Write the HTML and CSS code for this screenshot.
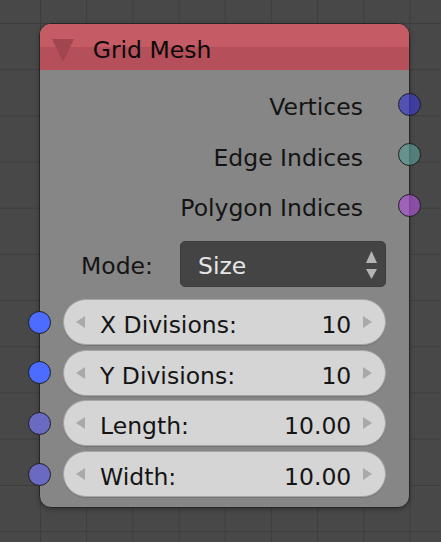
FILE: index.html
```html
<!DOCTYPE html>
<html>
<head>
<meta charset="utf-8">
<link rel="stylesheet" href="styles.css">
</head>
<body>
<div class="canvas">
  <div class="node">
    <div class="header">
      <svg class="collapse" width="22" height="32" viewBox="0 0 22 32"><polygon points="0,8 22,8 11,31" fill="#a1454f"/></svg>
      <span class="title">Grid Mesh</span>
    </div>
    <div class="content">
      <div class="outputs">
        <div class="out"><span class="t">Vertices</span><i class="sock out-sock s-vert"></i></div>
        <div class="out"><span class="t">Edge Indices</span><i class="sock out-sock s-edge"></i></div>
        <div class="out"><span class="t">Polygon Indices</span><i class="sock out-sock s-poly"></i></div>
      </div>
      <div class="mode">
        <span class="mode-label">Mode:</span>
        <div class="select">
          <span class="select-text">Size</span>
          <svg class="updown" width="11" height="28" viewBox="0 0 11 28"><polygon points="5.5,0 11,12 0,12" fill="#b4b4b4"/><polygon points="0,18 11,18 5.5,28" fill="#b4b4b4"/></svg>
        </div>
      </div>
      <div class="fields">
        <div class="field-row"><i class="sock in-sock s-int"></i>
          <div class="field">
            <svg class="arr" width="9" height="12" viewBox="0 0 9 12"><polygon points="9,0 9,12 0,6" fill="#a9a9a9"/></svg>
            <span class="label">X Divisions:</span><span class="value">10</span>
            <svg class="arr arr-r" width="9" height="12" viewBox="0 0 9 12"><polygon points="0,0 9,6 0,12" fill="#a9a9a9"/></svg>
          </div>
        </div>
        <div class="field-row"><i class="sock in-sock s-int"></i>
          <div class="field">
            <svg class="arr" width="9" height="12" viewBox="0 0 9 12"><polygon points="9,0 9,12 0,6" fill="#a9a9a9"/></svg>
            <span class="label">Y Divisions:</span><span class="value">10</span>
            <svg class="arr arr-r" width="9" height="12" viewBox="0 0 9 12"><polygon points="0,0 9,6 0,12" fill="#a9a9a9"/></svg>
          </div>
        </div>
        <div class="field-row"><i class="sock in-sock s-float"></i>
          <div class="field">
            <svg class="arr" width="9" height="12" viewBox="0 0 9 12"><polygon points="9,0 9,12 0,6" fill="#a9a9a9"/></svg>
            <span class="label">Length:</span><span class="value">10.00</span>
            <svg class="arr arr-r" width="9" height="12" viewBox="0 0 9 12"><polygon points="0,0 9,6 0,12" fill="#a9a9a9"/></svg>
          </div>
        </div>
        <div class="field-row"><i class="sock in-sock s-float"></i>
          <div class="field">
            <svg class="arr" width="9" height="12" viewBox="0 0 9 12"><polygon points="9,0 9,12 0,6" fill="#a9a9a9"/></svg>
            <span class="label">Width:</span><span class="value">10.00</span>
            <svg class="arr arr-r" width="9" height="12" viewBox="0 0 9 12"><polygon points="0,0 9,6 0,12" fill="#a9a9a9"/></svg>
          </div>
        </div>
      </div>
    </div>
  </div>
</div>
</body>
</html>
```
FILE: styles.css
```css
html, body {
  margin: 0;
  padding: 0;
}
body {
  width: 441px;
  height: 542px;
  overflow: hidden;
  background-color: #484848;
  background-image:
    linear-gradient(to right, #3d3d3d 1px, transparent 1px),
    linear-gradient(to bottom, #3d3d3d 1px, transparent 1px);
  background-size: 46.2px 46.2px;
  background-position: 40px 23px;
  font-family: "DejaVu Sans", "Liberation Sans", sans-serif;
  font-size: 23.5px;
  color: #141414;
}
.canvas {
  position: relative;
  width: 441px;
  height: 542px;
}
.node {
  position: absolute;
  left: 39px;
  top: 23px;
  width: 371px;
  box-sizing: border-box;
  border: 1px solid #262626;
  border-radius: 12px;
  background: #868686;
  box-shadow: 0 2px 4px rgba(0,0,0,0.25);
}
.header {
  height: 46px;
  border-radius: 11px 11px 0 0;
  background: linear-gradient(to bottom, #c55c65 0, #c55c65 23px, #b5505a 23px, #b5505a 100%);
  display: flex;
  align-items: center;
  padding-left: 12px;
}
.collapse {
  display: block;
}
.title {
  margin-left: 18.7px;
  padding-top: 5px;
  color: #0a0a0a;
}
.content {
  padding: 9px 0 10px 0;
}
.out {
  position: relative;
  height: 50.5px;
  display: flex;
  align-items: center;
  justify-content: flex-end;
  padding-right: 46px;
}
.t {
  padding-top: 6px;
}
.sock {
  position: absolute;
  width: 23px;
  height: 23px;
  box-sizing: border-box;
  border-radius: 50%;
  border: 1px solid #1e1e1e;
  top: calc(50% - 11.5px);
}
.out-sock {
  right: -12px;
}
.s-vert { background: rgba(58, 58, 200, 0.68); }
.s-edge { background: rgba(88, 152, 146, 0.68); }
.s-poly { background: rgba(168, 82, 210, 0.68); }
.mode {
  margin-top: 10.5px;
  height: 46px;
  display: flex;
  align-items: center;
  padding: 0 23px 0 41px;
}
.mode-label {
  width: 99px;
  padding-top: 3px;
}
.select {
  flex: 1;
  height: 46px;
  box-sizing: border-box;
  background: #444444;
  border: 1px solid #3c3c3c;
  border-radius: 5px;
  display: flex;
  align-items: center;
  padding: 0 8px 0 17px;
}
.select-text {
  flex: 1;
  color: #e6e6e6;
  padding-top: 3px;
}
.updown {
  display: block;
  margin-top: 1px;
}
.fields {
  margin-top: 12px;
  display: flex;
  flex-direction: column;
  gap: 4.7px;
}
.field-row {
  position: relative;
  padding: 0 23px;
}
.in-sock {
  left: -12px;
}
.s-int { background: #4c6bff; }
.s-float { background: #6a6ac2; }
.field {
  height: 46px;
  box-sizing: border-box;
  background: #d5d5d5;
  border: 1px solid #a4a4a4;
  border-radius: 23px;
  box-shadow: 0 1px 0 rgba(0,0,0,0.12);
  display: flex;
  align-items: center;
  padding: 0 13px 0 12px;
}
.arr {
  display: block;
  flex: none;
}
.label {
  flex: 1;
  margin-left: 15px;
  padding-top: 6px;
}
.value {
  padding-top: 6px;
  margin-right: 11.7px;
}
```
